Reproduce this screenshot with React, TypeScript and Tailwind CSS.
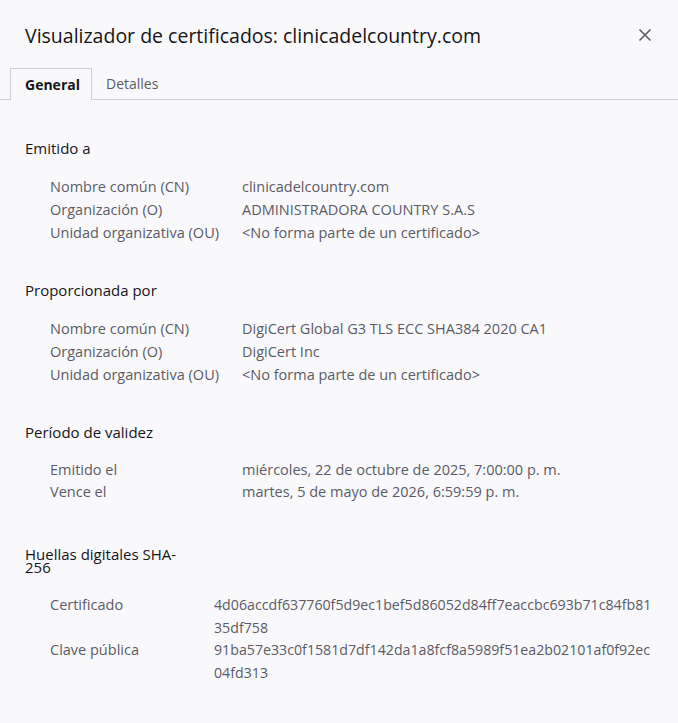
import React from 'react';

const sections = [
  {
    title: 'Emitido a',
    rows: [
      ['Nombre común (CN)', 'clinicadelcountry.com'],
      ['Organización (O)', 'ADMINISTRADORA COUNTRY S.A.S'],
      ['Unidad organizativa (OU)', '<No forma parte de un certificado>'],
    ],
  },
  {
    title: 'Proporcionada por',
    rows: [
      ['Nombre común (CN)', 'DigiCert Global G3 TLS ECC SHA384 2020 CA1'],
      ['Organización (O)', 'DigiCert Inc'],
      ['Unidad organizativa (OU)', '<No forma parte de un certificado>'],
    ],
  },
];

const validity = [
  ['Emitido el', 'miércoles, 22 de octubre de 2025, 7:00:00 p. m.'],
  ['Vence el', 'martes, 5 de mayo de 2026, 6:59:59 p. m.'],
];

const hashes = [
  ['Certificado', '4d06accdf637760f5d9ec1bef5d86052d84ff7eaccbc693b71c84fb8135df758'],
  ['Clave pública', '91ba57e33c0f1581d7df142da1a8fcf8a5989f51ea2b02101af0f92ec04fd313'],
];

const App: React.FC = () => {
  return (
    <div
      className="min-h-screen bg-[#f9f9fb] text-[#15141a]"
      style={{ fontFamily: '"Open Sans", "Noto Sans", sans-serif' }}
    >
      {/* header */}
      <div className="flex items-center justify-between pl-[25px] pr-[26px] pt-[12px] pb-[8px] h-[68px]">
        <h1 className="text-[19.5px] leading-[26px]">
          Visualizador de certificados: clinicadelcountry.com
        </h1>
        <button className="text-[#5b5b66] mb-[3px]">
          <svg width="14" height="14" viewBox="0 0 14 14" fill="none" stroke="currentColor" strokeWidth="1.6">
            <path d="M1.5 1.5 L12.5 12.5 M12.5 1.5 L1.5 12.5" />
          </svg>
        </button>
      </div>

      {/* tabs */}
      <div className="flex items-end border-b border-[#cfcfd8] pl-[10px] h-[32px]">
        <div className="h-[32px] -mb-px border border-b-0 border-[#cfcfd8] bg-[#f9f9fb] pl-[14px] pr-[11px] flex items-center text-[14px] font-bold">
          General
        </div>
        <div className="h-[32px] px-[14px] flex items-center text-[14px] text-[#5b5b66]">Detalles</div>
      </div>

      {/* content */}
      <div className="px-[25px] pt-[37px] text-[14.5px] leading-[23px]">
        {sections.map((s) => (
          <div key={s.title} className="mb-[35px]">
            <h2 className="text-[15px] mb-[15px]">{s.title}</h2>
            <div className="pl-[25px] text-[#5b5b66]">
              {s.rows.map(([k, v]) => (
                <div key={k} className="flex">
                  <div className="w-[192px] shrink-0">{k}</div>
                  <div>{v}</div>
                </div>
              ))}
            </div>
          </div>
        ))}

        <div className="mb-[45px]">
          <h2 className="text-[15px] mb-[15px]">Período de validez</h2>
          <div className="pl-[25px] text-[#5b5b66] leading-[22px]">
            {validity.map(([k, v]) => (
              <div key={k} className="flex">
                <div className="w-[192px] shrink-0">{k}</div>
                <div>{v}</div>
              </div>
            ))}
          </div>
        </div>

        <div>
          <h2 className="text-[15px] leading-[13px] w-[160px] mb-[20px]">Huellas digitales SHA-256</h2>
          <div className="pl-[25px] text-[#5b5b66] leading-[22.5px]">
            {hashes.map(([k, v]) => (
              <div key={k} className="flex">
                <div className="w-[164px] shrink-0">{k}</div>
                <div className="text-[14.2px]">
                  <div>{v.slice(0, 57)}</div>
                  <div>{v.slice(57)}</div>
                </div>
              </div>
            ))}
          </div>
        </div>
      </div>
    </div>
  );
};

export default App;
